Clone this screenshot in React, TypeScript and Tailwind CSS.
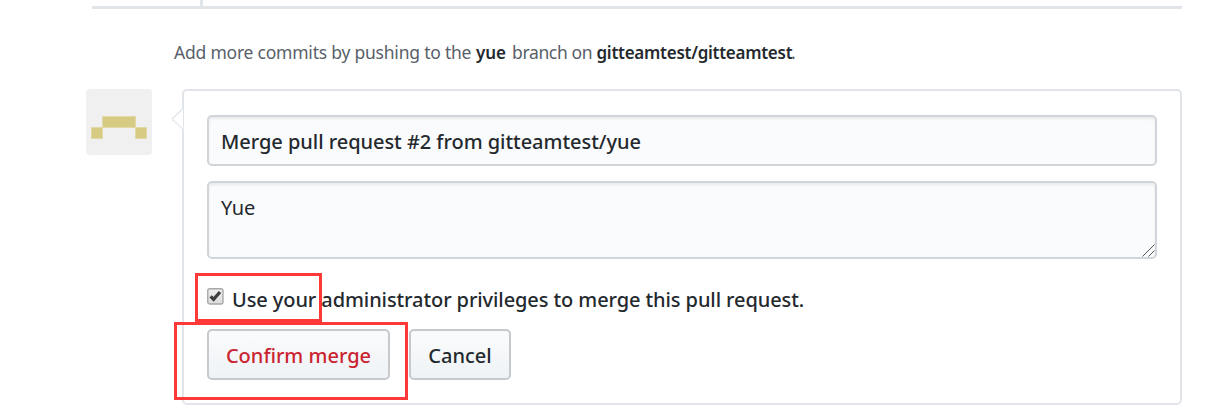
import React from "react";

function Avatar() {
  return (
    <svg className="block size-[66px] shrink-0" viewBox="0 0 66 66" aria-hidden="true">
      <rect width="66" height="66" rx="4" fill="#f0f0f0" />
      <path d="M16 27h34v12H16zM5 38h12v12H5zM49 38h12v12H49z" fill="#e2daa6" />
      <path d="M17 28h32v10H17zM6 39h10v10H6zM50 39h10v10H50z" fill="#d7cb84" />
    </svg>
  );
}

function Caret() {
  return (
    <svg className="absolute -left-[13px] top-[16px] h-[24px] w-[13px]" viewBox="0 0 13 24" aria-hidden="true">
      <path d="M12 1.5L0.8 12L12 22.5z" fill="#fff" />
      <path d="M12.5 1L1 12" fill="none" stroke="#e1e4e8" strokeWidth="1.4" />
      <path d="M1 12L12.5 23" fill="none" stroke="#e8eaed" strokeWidth="1.4" />
    </svg>
  );
}

function Checkbox() {
  return (
    <svg className="block h-[17px] w-[17px] shrink-0" viewBox="0 0 17 17" aria-hidden="true">
      <defs>
        <linearGradient id="box" x1="0" y1="0" x2="0" y2="1">
          <stop offset="0" stopColor="#eeeeee" />
          <stop offset="1" stopColor="#dcdcdc" />
        </linearGradient>
      </defs>
      <rect x="0.75" y="0.75" width="15.2" height="15.2" rx="2" fill="url(#box)" stroke="#a8a8a8" strokeWidth="1.4" />
      <path d="M3.6 8.4L6.6 11.4L13 4" fill="none" stroke="#3d3d3d" strokeWidth="3.2" />
    </svg>
  );
}

const button =
  "flex h-[51px] items-center justify-center rounded-[5px] border-2 border-[#c6cacd] bg-linear-to-b from-[#fafbfc] to-[#eff3f6] pt-[2px] text-[20px] font-medium";
const field =
  "w-full rounded-[5px] border-2 border-[#d1d5da] bg-[#fafbfc] px-[12px] text-[20px] text-[#24292e] shadow-[inset_0_2px_3px_rgba(27,31,35,0.075)]";

export default function App() {
  return (
    <div className="relative h-[415px] w-[1206px] overflow-hidden bg-white pl-[86px] pr-[24px] font-['Noto_Sans','Open_Sans',sans-serif] text-[#24292e]">
      <div className="ml-[6px] h-[9px] border-b-[3px] border-[#e1e4e8] pl-[108px]">
        <div className="h-[6px] w-[3px] bg-[#e1e4e8]" />
      </div>
      <p className="ml-[88px] mt-[31px] flex h-[24px] items-baseline whitespace-pre text-[17.5px] leading-[24px] text-[#586069]">
        <span className="w-[302px] tracking-[-0.22px]">Add more commits by pushing to the</span>
        <strong className="w-[36px] text-[17px] font-semibold tracking-[-0.1px] text-[#24292e]">yue</strong>
        <span className="w-[84.5px] tracking-[-0.35px]">branch on</span>
        <strong className="w-[194.5px] text-[17px] font-semibold tracking-[-0.27px] text-[#24292e]">gitteamtest/gitteamtest</strong>
        <span>.</span>
      </p>
      <div className="mt-[25px] flex gap-[30px]">
        <Avatar />
        <section className="relative h-[316px] flex-1 rounded-[5px] border-2 border-[#e1e4e8] px-[23px] pt-[24px]">
          <Caret />
          <div className={`${field} flex h-[51px] items-center pt-[2px] font-medium tracking-[-0.04px]`}>
            <span className="whitespace-nowrap">Merge pull request #2 from gitteamtest/yue</span>
          </div>
          <div className={`${field} relative mt-[15px] h-[78px] pt-[10px] leading-[30px]`}>
            Yue
            <svg className="absolute bottom-0 right-0 size-[13px]" viewBox="0 0 13 13" aria-hidden="true">
              <path d="M0.5 12.5L12.5 0.5M6.5 12.5L12.5 6.5" stroke="#555" strokeWidth="1" />
            </svg>
          </div>
          <label className="mt-[29px] flex h-[24px] gap-[8px] whitespace-nowrap text-[20px] font-medium leading-[24px] tracking-[-0.09px]">
            <Checkbox />
            <span>Use your administrator privileges to merge this pull request.</span>
          </label>
          <div className="mt-[17px] flex gap-[19px]">
            <button className={`${button} w-[183px] text-[#cb2431]`}>
              <span>Confirm merge</span>
            </button>
            <button className={`${button} w-[102px] text-[#24292e]`}>
              <span>Cancel</span>
            </button>
          </div>
        </section>
      </div>
      <div className="absolute left-[195px] top-[273px] h-[49px] w-[127px] border-[3px] border-[#ff3838]" />
      <div className="absolute left-[174px] top-[322px] h-[78px] w-[234px] border-[3px] border-[#ff3838]" />
    </div>
  );
}
